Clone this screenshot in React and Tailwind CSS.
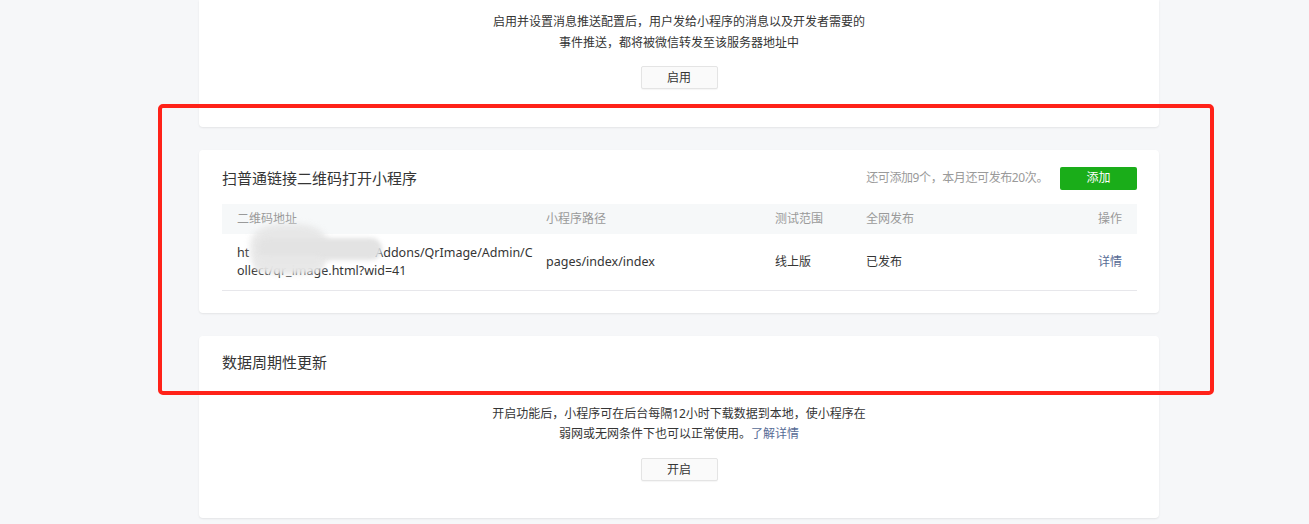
import React from "react";

const font = {
  fontFamily: '"Noto Sans", "Noto Sans CJK SC", sans-serif',
};

function PlainButton({ children }) {
  return (
    <button className="block h-[23px] w-[77px] rounded-[2px] border border-[#e4e4e4] bg-[#fafafa] text-[12px] leading-[21px] text-[#353535] shadow-[0_1px_1px_rgba(0,0,0,0.04)]">
      {children}
    </button>
  );
}

function QrTable() {
  return (
    <div className="mt-[14px]">
      {/* 表头 */}
      <div className="grid h-[30px] grid-cols-[324px_229px_91px_1fr_auto] items-center bg-[#f6f8f9] text-[12px] text-[#9a9a9a]">
        <div className="pl-[15px]">二维码地址</div>
        <div>小程序路径</div>
        <div>测试范围</div>
        <div>全网发布</div>
        <div className="pr-[15px] text-right">操作</div>
      </div>

      {/* 数据行 */}
      <div className="relative grid h-[57px] grid-cols-[324px_229px_91px_1fr_auto] items-center border-b border-[#e7e7eb] text-[12px] text-[#353535]">
        <div className="pl-[15px] pr-[9px] text-[12.5px] leading-[18px]">
          <div className="whitespace-nowrap">
            ht
            <span className="inline-block w-[126px]" />
            Addons/QrImage/Admin/C
          </div>
          <div className="whitespace-nowrap">ollect/qr_image.html?wid=41</div>
        </div>
        <div className="text-[12.5px]">pages/index/index</div>
        <div>线上版</div>
        <div>已发布</div>
        <div className="pr-[15px] text-right text-[#576b95]">详情</div>

        {/* 打码区域 */}
        <div className="absolute left-[28px] top-[-10px] h-[50px] w-[78px] rounded-[40%] bg-[#e6e6e6] opacity-90 blur-[3px]" />
        <div className="absolute left-[36px] top-[4px] h-[22px] w-[124px] rounded-full bg-[#e3e3e3] blur-[2px]" />
        <div className="absolute left-[32px] top-[22px] h-[16px] w-[70px] rounded-full bg-[#e8e8e8] opacity-80 blur-[2px]" />
      </div>
    </div>
  );
}

export default function App() {
  return (
    <div
      className="relative min-h-[524px] w-full overflow-hidden bg-[#f6f7f9]"
      style={font}
    >
      <div className="ml-[199px] flex w-[960px] flex-col gap-[23px]">
        {/* 消息推送 */}
        <div className="rounded-b-[4px] bg-white pb-[38px] pt-[11px] text-center shadow-[0_1px_2px_rgba(0,0,0,0.08)]">
          <p className="text-[12px] leading-[21px] text-[#353535]">
            启用并设置消息推送配置后，用户发给小程序的消息以及开发者需要的
            <br />
            事件推送，都将被微信转发至该服务器地址中
          </p>
          <div className="mt-[13px] flex justify-center">
            <PlainButton>启用</PlainButton>
          </div>
        </div>

        {/* 扫普通链接二维码打开小程序 */}
        <div className="rounded-[4px] bg-white pb-[22px] pl-[23px] pr-[22px] pt-[16px] shadow-[0_1px_2px_rgba(0,0,0,0.08)]">
          <div className="flex h-[24px] items-center justify-between">
            <h3 className="text-[15px] font-normal text-[#353535]">
              扫普通链接二维码打开小程序
            </h3>
            <div className="flex items-center gap-[12px]">
              <span className="text-[12px] tracking-[-0.4px] text-[#9a9a9a]">
                还可添加9个，本月还可发布20次。
              </span>
              <button className="block h-[23px] w-[77px] rounded-[2px] bg-[#1aad19] text-[12px] text-white">
                添加
              </button>
            </div>
          </div>
          <QrTable />
        </div>

        {/* 数据周期性更新 */}
        <div className="rounded-[4px] bg-white px-[23px] pb-[37px] pt-[14px] shadow-[0_1px_2px_rgba(0,0,0,0.08)]">
          <h3 className="h-[24px] text-[15px] font-normal leading-[24px] text-[#353535]">
            数据周期性更新
          </h3>
          <div className="mt-[30px] text-center">
            <p className="text-[12px] leading-[20px] text-[#353535]">
              开启功能后，小程序可在后台每隔12小时下载数据到本地，使小程序在
              <br />
              弱网或无网条件下也可以正常使用。
              <a className="text-[#576b95]">了解详情</a>
            </p>
            <div className="mt-[14px] flex justify-center">
              <PlainButton>开启</PlainButton>
            </div>
          </div>
        </div>
      </div>

      {/* 红色标注框 */}
      <div className="pointer-events-none absolute left-[158px] top-[104px] h-[291px] w-[1056px] rounded-[5px] border-4 border-[#ff2219]" />
    </div>
  );
}
